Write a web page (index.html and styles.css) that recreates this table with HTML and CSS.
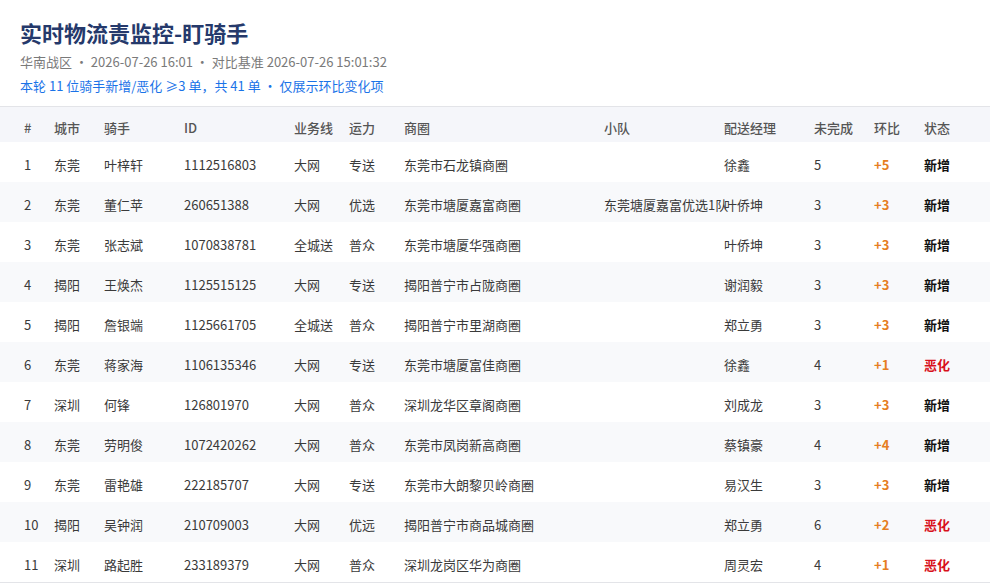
FILE: index.html
```html
<!DOCTYPE html>
<html lang="zh">
<head>
<meta charset="utf-8">
<title>实时物流责监控-盯骑手</title>
<link rel="stylesheet" href="styles.css">
</head>
<body>
<div class="page">
  <header class="head">
    <h1 class="title">实时物流责监控-盯骑手</h1>
    <div class="sub">华南战区 · 2026-07-26 16:01 · 对比基准 2026-07-26 15:01:32</div>
    <div class="note">本轮 11 位骑手新增/恶化 ≥3 单，共 41 单 · 仅展示环比变化项</div>
  </header>
  <table class="grid">
    <colgroup>
      <col class="c-no"><col class="c-city"><col class="c-rider"><col class="c-id"><col class="c-line"><col class="c-cap"><col class="c-area"><col class="c-team"><col class="c-mgr"><col class="c-open"><col class="c-diff"><col class="c-state">
    </colgroup>
    <thead>
      <tr><th>#</th><th>城市</th><th>骑手</th><th>ID</th><th>业务线</th><th>运力</th><th>商圈</th><th>小队</th><th>配送经理</th><th>未完成</th><th>环比</th><th>状态</th></tr>
    </thead>
    <tbody>
      <tr><td>1</td><td>东莞</td><td>叶梓轩</td><td>1112516803</td><td>大网</td><td>专送</td><td>东莞市石龙镇商圈</td><td></td><td>徐鑫</td><td>5</td><td class="diff">+5</td><td class="new">新增</td></tr>
      <tr><td>2</td><td>东莞</td><td>董仁苹</td><td>260651388</td><td>大网</td><td>优选</td><td>东莞市塘厦嘉富商圈</td><td>东莞塘厦嘉富优选1队</td><td>叶侨坤</td><td>3</td><td class="diff">+3</td><td class="new">新增</td></tr>
      <tr><td>3</td><td>东莞</td><td>张志斌</td><td>1070838781</td><td>全城送</td><td>普众</td><td>东莞市塘厦华强商圈</td><td></td><td>叶侨坤</td><td>3</td><td class="diff">+3</td><td class="new">新增</td></tr>
      <tr><td>4</td><td>揭阳</td><td>王焕杰</td><td>1125515125</td><td>大网</td><td>专送</td><td>揭阳普宁市占陇商圈</td><td></td><td>谢润毅</td><td>3</td><td class="diff">+3</td><td class="new">新增</td></tr>
      <tr><td>5</td><td>揭阳</td><td>詹银端</td><td>1125661705</td><td>全城送</td><td>普众</td><td>揭阳普宁市里湖商圈</td><td></td><td>郑立勇</td><td>3</td><td class="diff">+3</td><td class="new">新增</td></tr>
      <tr><td>6</td><td>东莞</td><td>蒋家海</td><td>1106135346</td><td>大网</td><td>专送</td><td>东莞市塘厦富佳商圈</td><td></td><td>徐鑫</td><td>4</td><td class="diff">+1</td><td class="bad">恶化</td></tr>
      <tr><td>7</td><td>深圳</td><td>何锋</td><td>126801970</td><td>大网</td><td>普众</td><td>深圳龙华区章阁商圈</td><td></td><td>刘成龙</td><td>3</td><td class="diff">+3</td><td class="new">新增</td></tr>
      <tr><td>8</td><td>东莞</td><td>劳明俊</td><td>1072420262</td><td>大网</td><td>普众</td><td>东莞市凤岗新高商圈</td><td></td><td>蔡镇豪</td><td>4</td><td class="diff">+4</td><td class="new">新增</td></tr>
      <tr><td>9</td><td>东莞</td><td>雷艳雄</td><td>222185707</td><td>大网</td><td>专送</td><td>东莞市大朗黎贝岭商圈</td><td></td><td>易汉生</td><td>3</td><td class="diff">+3</td><td class="new">新增</td></tr>
      <tr><td>10</td><td>揭阳</td><td>吴钟润</td><td>210709003</td><td>大网</td><td>优远</td><td>揭阳普宁市商品城商圈</td><td></td><td>郑立勇</td><td>6</td><td class="diff">+2</td><td class="bad">恶化</td></tr>
      <tr><td>11</td><td>深圳</td><td>路起胜</td><td>233189379</td><td>大网</td><td>普众</td><td>深圳龙岗区华为商圈</td><td></td><td>周灵宏</td><td>4</td><td class="diff">+1</td><td class="bad">恶化</td></tr>
    </tbody>
  </table>
</div>
</body>
</html>
```

FILE: styles.css
```css
* { box-sizing: border-box; }
html, body { margin: 0; padding: 0; background: #fff; }
body {
  font-family: "Noto Sans CJK SC", "Noto Sans", sans-serif;
  color: #333;
  font-size: 13px;
}
.page { width: 990px; }
.head {
  padding: 16px 20px 10px;
  border-bottom: 1px solid #e3e4e8;
}
.title {
  margin: 0;
  font-size: 22px;
  line-height: 32px;
  font-weight: 700;
  color: #25396b;
}
.sub {
  margin-top: 4px;
  font-size: 13px;
  line-height: 20px;
  color: #7a7a7a;
}
.note {
  margin-top: 4px;
  font-size: 13px;
  line-height: 20px;
  color: #1a73e8;
}
.grid {
  width: 990px;
  border-collapse: collapse;
  table-layout: fixed;
  border-bottom: 1px solid #e3e4e8;
}
.c-no { width: 54px; }
.c-city { width: 50px; }
.c-rider { width: 80px; }
.c-id { width: 110px; }
.c-line { width: 55px; }
.c-cap { width: 55px; }
.c-area { width: 200px; }
.c-team { width: 120px; }
.c-mgr { width: 90px; }
.c-open { width: 60px; }
.c-diff { width: 50px; }
.c-state { width: 66px; }
.grid th, .grid td {
  padding: 0;
  text-align: left;
  white-space: nowrap;
  overflow: visible;
}
.grid th:first-child, .grid td:first-child { padding-left: 24px; }
.grid thead tr { background: #f5f6fa; }
.grid th {
  height: 35px;
  font-weight: 500;
  color: #555;
  padding-top: 5px;
}
.grid td {
  height: 40px;
  color: #3a3a3a;
  padding-top: 5px;
}
.grid tbody tr:nth-child(even) { background: #f8f9fb; }
.grid td.diff { color: #e67e22; font-weight: 700; }
.grid td.new { color: #111; font-weight: 700; }
.grid td.bad { color: #d8121b; font-weight: 700; }
```
